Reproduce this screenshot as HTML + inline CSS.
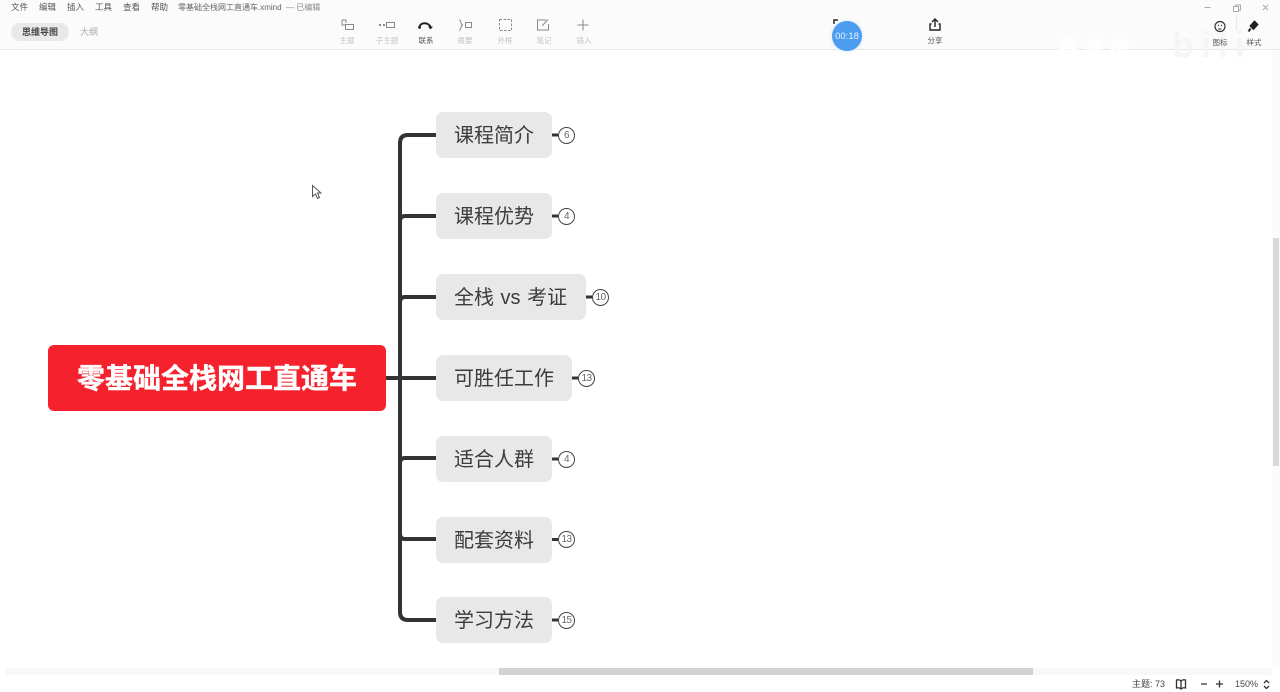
<!DOCTYPE html>
<html lang="zh"><head><meta charset="utf-8"><title>零基础全栈网工直通车.xmind</title>
<style>
html,body{margin:0;padding:0;width:1280px;height:692px;overflow:hidden;background:#fff}
body{font-family:"Liberation Sans","Noto Sans CJK SC",sans-serif;color:#333}
#w{position:relative;width:1280px;height:692px;overflow:hidden;filter:blur(.35px)}
.a{position:absolute;white-space:nowrap}
.bar{position:absolute;left:0;top:0;width:1280px;height:49px;background:#fbfbfb;border-bottom:1px solid #e6e6e6}
.m{top:2px;font-size:8.500px;line-height:11px;color:#555}
.t{top:36px;font-size:7.500px;line-height:10px;color:#c4c4c4;width:40px;text-align:center}
.n{position:absolute;left:436px;height:46px;background:#e8e8e8;border-radius:7px;font-size:20px;line-height:48px;color:#3c3c3c;padding-left:18px;box-sizing:border-box;white-space:nowrap;word-spacing:1px}
.c{position:absolute;width:17px;height:17px;box-sizing:border-box;border:1.300px solid #444;border-radius:50%;background:#fff;font-size:10px;line-height:16px;text-align:center;color:#666;letter-spacing:-.6px}
svg{position:absolute;overflow:visible}
</style></head><body><div id="w">
<div class="bar"></div>

<span class="a" style="left:1058px;top:36px;font-size:20px;line-height:26px;font-weight:bold;color:#fff;letter-spacing:6px">零基础</span>
<span class="a" style="left:1172px;top:26px;font-size:36px;line-height:38px;font-weight:bold;color:#f5f5f5;letter-spacing:7px">bili</span>

<span class="a m" style="left:11px">文件</span>
<span class="a m" style="left:39px">编辑</span>
<span class="a m" style="left:67px">插入</span>
<span class="a m" style="left:95px">工具</span>
<span class="a m" style="left:123px">查看</span>
<span class="a m" style="left:151px">帮助</span>
<span class="a m" style="left:178px;font-size:8px;color:#666">零基础全栈网工直通车.xmind</span>
<span class="a m" style="left:286px;font-size:8px;color:#888">— 已编辑</span>

<div class="a" style="left:11px;top:23px;width:58px;height:18px;border-radius:9px;background:#e9e9e9;font-size:9px;font-weight:bold;line-height:18px;text-align:center;color:#444">思维导图</div>
<span class="a" style="left:80px;top:26px;font-size:9px;line-height:12px;color:#aaa">大纲</span>

<svg style="left:0;top:0" width="1280" height="50" fill="none" stroke="#888" stroke-width="1">
<path d="M342 20h4v3M342 20v5h3"/><rect x="345.500" y="24.500" width="8" height="5"/>
<circle cx="380" cy="25" r="1" fill="#666" stroke="none"/><circle cx="384" cy="25" r="1" fill="#666" stroke="none"/><rect x="386.500" y="22.500" width="8" height="5"/>
<path d="M419.500 27c1-5 9-5 11 0" stroke="#222" stroke-width="2"/><circle cx="419.500" cy="27.500" r="1.400" fill="#222" stroke="none"/><path d="M428 26.500h5l-2.500 3z" fill="#222" stroke="none"/>
<path d="M459 20c3 0 1 5 4 5c-3 0-1 5-4 5"/><rect x="465.500" y="22.500" width="6" height="5"/>
<rect x="499.500" y="19.500" width="12" height="11" stroke-dasharray="2.500 1.500"/>
<path d="M546 20h-8.500v10h11v-6M542 26l6-6.500"/>
<path d="M583 19.500v11M577.500 25h11"/>
<path d="M935 19v8M932 22l3-3l3 3M931.500 24h-1.500v6h10v-6h-1.500" stroke="#222" stroke-width="1.400"/>
<circle cx="1220" cy="26.500" r="5" stroke="#333" stroke-width="1.200"/><circle cx="1218.500" cy="25.500" r=".7" fill="#333" stroke="none"/><circle cx="1221.500" cy="25.500" r=".7" fill="#333" stroke="none"/><path d="M1218 29h3.500" stroke="#333"/>
<path d="M1250 26l4.500-5l3.500 3.500l-4.500 5z" fill="#222" stroke="#222"/><path d="M1250.500 28.500l-2 3" stroke="#222" stroke-width="2"/>
<path d="M1204.500 7.500h6" stroke="#aaa"/>
<rect x="1233.500" y="6.500" width="5" height="5" stroke="#aaa"/><path d="M1235.500 6.500v-1.500h5v5h-2" stroke="#aaa"/>
<path d="M1263 5l5 5M1268 5l-5 5" stroke="#aaa"/>
<path d="M834 24v-4h4" stroke="#222" stroke-width="1.500"/>
<path d="M1236.500 14v16" stroke="#e8e8e8"/>
</svg>

<span class="a t" style="left:327px">主题</span>
<span class="a t" style="left:367px">子主题</span>
<span class="a t" style="left:406px;color:#555">联系</span>
<span class="a t" style="left:445px">概要</span>
<span class="a t" style="left:485px">外框</span>
<span class="a t" style="left:524px">笔记</span>
<span class="a t" style="left:564px">插入</span>
<span class="a t" style="left:915px;color:#555">分享</span>
<span class="a t" style="left:1200px;top:38px;color:#555">图标</span>
<span class="a t" style="left:1234px;top:38px;color:#555">样式</span>

<div class="a" style="left:832px;top:21px;width:30px;height:30px;border-radius:50%;background:#4c9df0;box-shadow:0 0 4px #cfe5fb;color:#e6f2ff;font-size:9.500px;line-height:31px;text-align:center">00:18</div>

<svg style="left:0;top:0" width="1280" height="692" fill="none" stroke="#333" stroke-width="4">
<path d="M436 135h-28q-8 0-8 8V612q0 8 8 8h28"/>
<path d="M400 221q0-5 5-5h31M400 302q0-5 5-5h31M400 463q0-5 5-5h31M400 534q0 5 5 5h31"/>
<path d="M386 378h50"/>
<path d="M552 135h6M552 216h6M586 297h6M572 378h6M552 459h6M552 539.500h6M552 620h6" stroke-width="3"/>
</svg>

<div class="a" style="left:48px;top:345px;width:338px;height:66px;background:#f5222d;border-radius:6px;color:#fff;font-size:28px;font-weight:bold;line-height:67px;text-align:center;-webkit-text-stroke:.4px #fff">零基础全栈网工直通车</div>

<div class="n" style="top:112px;width:116px">课程简介</div>
<div class="n" style="top:193px;width:116px">课程优势</div>
<div class="n" style="top:274px;width:150px">全栈 vs 考证</div>
<div class="n" style="top:355px;width:136px">可胜任工作</div>
<div class="n" style="top:436px;width:116px">适合人群</div>
<div class="n" style="top:517px;width:116px">配套资料</div>
<div class="n" style="top:597px;width:116px">学习方法</div>

<div class="c" style="left:558px;top:127px">6</div>
<div class="c" style="left:558px;top:208px">4</div>
<div class="c" style="left:592px;top:289px">10</div>
<div class="c" style="left:578px;top:370px">13</div>
<div class="c" style="left:558px;top:451px">4</div>
<div class="c" style="left:558px;top:531px">13</div>
<div class="c" style="left:558px;top:612px">15</div>

<svg style="left:312px;top:185px" width="10" height="15"><path d="M.5 .5v11l3-2.500l2 4.500l2-1l-2-4.500h3.500z" fill="#fff" stroke="#555" stroke-width="1"/></svg>

<div class="a" style="left:1272px;top:50px;width:8px;height:618px;background:#fbfbfb"></div>
<div class="a" style="left:1273px;top:238px;width:6px;height:228px;background:#d9d9d9"></div>
<div class="a" style="left:6px;top:668px;width:1266px;height:7px;background:#f8f8f8"></div>
<div class="a" style="left:499px;top:668px;width:534px;height:7px;background:#d2d2d2"></div>

<span class="a" style="left:1132px;top:678px;font-size:9px;line-height:12px;color:#444">主题: 73</span>
<svg style="left:1175px;top:678px" width="13" height="12" fill="none" stroke="#333" stroke-width="1.300"><path d="M6 3c-1-1-3-1.500-4.500-1v8c1.500-.5 3.500 0 4.500 1c1-1 3-1.500 4.500-1v-8c-1.500-.5-3.500 0-4.500 1zM6 3v8"/></svg>
<svg style="left:1200px;top:679px" width="70" height="11" fill="none" stroke="#333" stroke-width="1.300"><path d="M1 5h6M16 5h7M19.500 1.500v7M64 4l2.500-2.500L69 4M64 7l2.500 2.500L69 7"/></svg>
<span class="a" style="left:1235px;top:678px;font-size:9px;line-height:12px;color:#444">150%</span>
</div></body></html>
